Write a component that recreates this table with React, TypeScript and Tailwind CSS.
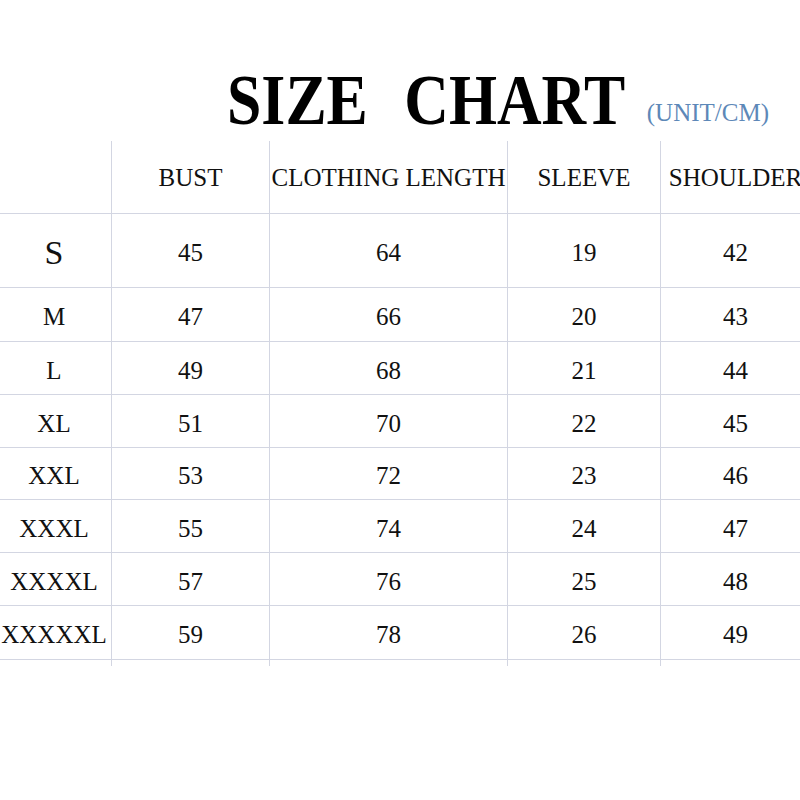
import { Fragment } from 'react';

const serif = { fontFamily: '"Liberation Serif", "Times New Roman", serif' };

interface SizeRow {
  size: string;
  bust: number;
  length: number;
  sleeve: number;
  shoulder: number;
  height: string;
  big?: boolean;
}

const rows: SizeRow[] = [
  { size: 'S', bust: 45, length: 64, sleeve: 19, shoulder: 42, height: 'h-[74px]', big: true },
  { size: 'M', bust: 47, length: 66, sleeve: 20, shoulder: 43, height: 'h-[54px]' },
  { size: 'L', bust: 49, length: 68, sleeve: 21, shoulder: 44, height: 'h-[53px]' },
  { size: 'XL', bust: 51, length: 70, sleeve: 22, shoulder: 45, height: 'h-[53px]' },
  { size: 'XXL', bust: 53, length: 72, sleeve: 23, shoulder: 46, height: 'h-[52px]' },
  { size: 'XXXL', bust: 55, length: 74, sleeve: 24, shoulder: 47, height: 'h-[53px]' },
  { size: 'XXXXL', bust: 57, length: 76, sleeve: 25, shoulder: 48, height: 'h-[53px]' },
  { size: 'XXXXXL', bust: 59, length: 78, sleeve: 26, shoulder: 49, height: 'h-[54px]' },
];

const headers = ['', 'BUST', 'CLOTHING LENGTH', 'SLEEVE', 'SHOULDER'];

export default function App() {
  return (
    <div className="w-[800px] h-[800px] overflow-hidden bg-white text-[#111]" style={serif}>
      {/* Title */}
      <div className="h-[141px] flex items-baseline pl-[227px] pt-[65px] whitespace-nowrap">
        <h1 className="text-[71px] font-bold leading-none text-black origin-left scale-x-[0.87]">
          SIZE<span className="ml-[42px]">CHART</span>
        </h1>
        <span className="ml-[-38px] text-[25px] leading-none text-[#5d88b8] relative -top-[3px]">
          (UNIT/CM)
        </span>
      </div>

      {/* Table */}
      <div className="grid grid-cols-[111px_158px_238px_153px_150px] w-[810px] text-[25px] leading-none">
        {headers.map((h, i) => (
          <div
            key={h || 'blank'}
            className={`h-[73px] flex items-center justify-center whitespace-nowrap border-b border-[#d3d6e2] ${
              i > 0 ? 'border-l' : ''
            }`}
          >
            {h}
          </div>
        ))}

        {rows.map((r) => (
          <Fragment key={r.size}>
            <div
              className={`${r.height} flex items-center justify-center pt-1 pr-[3px] whitespace-nowrap border-b border-[#d3d6e2] ${
                r.big ? 'text-[34px]' : ''
              }`}
            >
              {r.size}
            </div>
            {[r.bust, r.length, r.sleeve, r.shoulder].map((v, i) => (
              <div
                key={i}
                className={`${r.height} flex items-center justify-center pt-1 border-b border-l border-[#d3d6e2]`}
              >
                {v}
              </div>
            ))}
          </Fragment>
        ))}

        {/* line stubs below the last row */}
        <div className="h-[6px]" />
        <div className="h-[6px] border-l border-[#d3d6e2]" />
        <div className="h-[6px] border-l border-[#d3d6e2]" />
        <div className="h-[6px] border-l border-[#d3d6e2]" />
        <div className="h-[6px] border-l border-[#d3d6e2]" />
      </div>
    </div>
  );
}
